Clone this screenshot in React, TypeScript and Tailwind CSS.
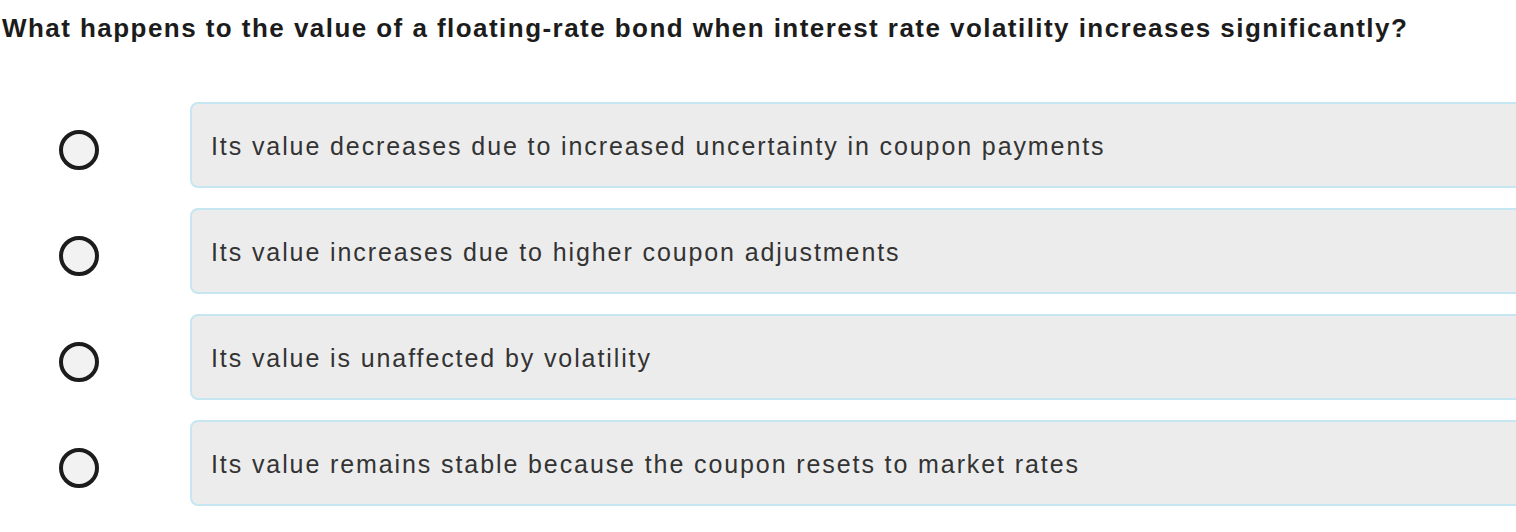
const options = [
  "Its value decreases due to increased uncertainty in coupon payments",
  "Its value increases due to higher coupon adjustments",
  "Its value is unaffected by volatility",
  "Its value remains stable because the coupon resets to market rates",
];

export default function App() {
  return (
    <div
      className="w-[1516px] h-[532px] overflow-hidden bg-white"
      style={{ fontFamily: '"Liberation Sans", Arial, sans-serif' }}
    >
      <h1 className="pl-[2px] pt-[12px] text-[26px] leading-[32px] font-bold tracking-[1.45px] text-[#1c1c1c] whitespace-nowrap">
        What happens to the value of a floating-rate bond when interest rate volatility increases significantly?
      </h1>
      <div className="mt-[58px] flex flex-col gap-[20px]">
        {options.map((opt) => (
          <div key={opt} className="flex items-center">
            <div className="w-[190px] shrink-0 flex items-center pl-[59px] pt-[9px]">
              <div className="w-[40px] h-[40px] rounded-full border-[4px] border-[#1c1c1c] bg-[#f2f2f2]" />
            </div>
            <div className="w-[1360px] shrink-0 h-[86px] rounded-[8px] border-[2px] border-[#c6e6f2] bg-[#ececec] flex items-center pl-[19px]">
              <span className="text-[25px] leading-[28px] tracking-[1.9px] text-[#333333] whitespace-nowrap mt-[2px]">
                {opt}
              </span>
            </div>
          </div>
        ))}
      </div>
    </div>
  );
}
